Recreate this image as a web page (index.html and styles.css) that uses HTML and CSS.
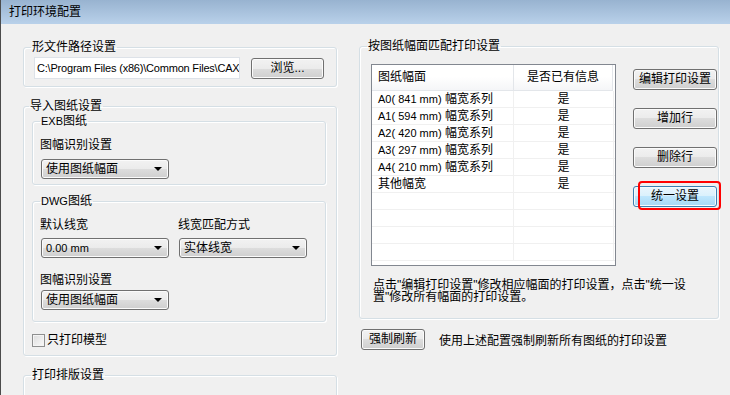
FILE: index.html
```html
<!DOCTYPE html>
<html lang="zh-CN">
<head>
<meta charset="utf-8">
<title>打印环境配置</title>
<link rel="stylesheet" href="styles.css">
</head>
<body>
<div class="window">
  <div class="titlebar">打印环境配置</div>
  <div class="content">
    <div class="col-left">
      <fieldset class="group g1">
        <legend class="shift3">形文件路径设置</legend>
        <div class="path-row">
          <div class="input lat">C:\Program Files (x86)\Common Files\CAX</div>
          <div class="btn btn-browse">浏览...</div>
        </div>
      </fieldset>

      <fieldset class="group g2">
        <legend class="shift3">导入图纸设置</legend>
        <fieldset class="group sub exb">
          <legend><span class="lat">EXB</span>图纸</legend>
          <div class="lbl">图幅识别设置</div>
          <div class="combo c-first"><span>使用图纸幅面</span><i class="arrow"></i></div>
        </fieldset>
        <fieldset class="group sub dwg">
          <legend><span class="lat">DWG</span>图纸</legend>
          <div class="dwg-grid">
            <div class="lbl">默认线宽</div>
            <div class="lbl">线宽匹配方式</div>
            <div class="combo c-row"><span class="lat">0.00 mm</span><i class="arrow"></i></div>
            <div class="combo c-row"><span>实体线宽</span><i class="arrow"></i></div>
          </div>
          <div class="lbl lbl-2">图幅识别设置</div>
          <div class="combo c-last"><span>使用图纸幅面</span><i class="arrow"></i></div>
        </fieldset>
        <div class="check-row"><span class="checkbox"></span><span>只打印模型</span></div>
      </fieldset>

      <fieldset class="group g3">
        <legend class="shift3">打印排版设置</legend>
      </fieldset>
    </div>

    <div class="col-right">
      <fieldset class="group g4">
        <legend class="shift4">按图纸幅面匹配打印设置</legend>
        <div class="match-row">
          <div class="list">
            <div class="lrow head">
              <div class="c1">图纸幅面</div><div class="c2">是否已有信息</div><div class="c3"></div>
            </div>
            <div class="lrow"><div class="c1"><span class="lat">A0( 841 mm)</span> 幅宽系列</div><div class="c2">是</div><div class="c3"></div></div>
            <div class="lrow"><div class="c1"><span class="lat">A1( 594 mm)</span> 幅宽系列</div><div class="c2">是</div><div class="c3"></div></div>
            <div class="lrow"><div class="c1"><span class="lat">A2( 420 mm)</span> 幅宽系列</div><div class="c2">是</div><div class="c3"></div></div>
            <div class="lrow"><div class="c1"><span class="lat">A3( 297 mm)</span> 幅宽系列</div><div class="c2">是</div><div class="c3"></div></div>
            <div class="lrow"><div class="c1"><span class="lat">A4( 210 mm)</span> 幅宽系列</div><div class="c2">是</div><div class="c3"></div></div>
            <div class="lrow"><div class="c1">其他幅宽</div><div class="c2">是</div><div class="c3"></div></div>
            <div class="lrow"><div class="c1"></div><div class="c2"></div><div class="c3"></div></div>
            <div class="lrow"><div class="c1"></div><div class="c2"></div><div class="c3"></div></div>
            <div class="lrow"><div class="c1"></div><div class="c2"></div><div class="c3"></div></div>
            <div class="lrow"><div class="c1"></div><div class="c2"></div><div class="c3"></div></div>
          </div>
          <div class="side-btns">
            <div class="btn">编辑打印设置</div>
            <div class="btn">增加行</div>
            <div class="btn">删除行</div>
            <div class="btn btn-focus">统一设置<span class="mark"></span></div>
          </div>
        </div>
        <p class="desc">点击"编辑打印设置"修改相应幅面的打印设置，点击"统一设置"修改所有幅面的打印设置。</p>
      </fieldset>
      <div class="refresh-row">
        <div class="btn btn-refresh">强制刷新</div>
        <span>使用上述配置强制刷新所有图纸的打印设置</span>
      </div>
    </div>
  </div>
</div>
</body>
</html>
```

FILE: styles.css
```css
* { box-sizing: border-box; }
html, body { margin: 0; padding: 0; }
body {
  background: #f0f0f0;
  font-family: "Liberation Sans", "Noto Sans CJK SC", sans-serif;
  font-size: 12px;
  color: #000;
}
.window {
  width: 730px;
  height: 395px;
  overflow: hidden;
  background: #f0f0f0;
  border-left: 1px solid #4b4b4b;
}
.titlebar {
  height: 24px;
  line-height: 24px;
  padding-left: 8px;
  background: linear-gradient(#98b3d0, #b9d1ea);
  font-size: 12px;
}
.content {
  display: flex;
  gap: 22px;
  padding-left: 22px;
}
.col-left { width: 314px; }
.col-right { width: 360px; }

.lat { font-family: "Liberation Sans", sans-serif; font-size: 11px; }

.group {
  margin: 0;
  border: 1px solid #d5dfe5;
  border-radius: 3px;
  box-shadow: inset 1px 1px 0 #fff, 1px 1px 0 #fff;
  min-width: 0;
}
.group legend {
  padding: 0 1px;
  line-height: 14px;
  font-size: 12px;
}
.group legend.shift3 { margin-left: -3px; }
.group legend.shift4 { margin-left: -4px; }

.g1 { margin-top: 16px; padding: 3px 10px 7px 10px; }
.path-row { display: flex; align-items: flex-start; gap: 11px; }
.input {
  width: 206px;
  height: 22px;
  line-height: 20px;
  background: #fff;
  border: 1px solid #dde2e8;
  padding-left: 2px;
  letter-spacing: -0.2px;
  white-space: nowrap;
  overflow: hidden;
}
.btn {
  height: 21px;
  line-height: 19px;
  text-align: center;
  border: 1px solid #707070;
  border-radius: 3px;
  background: linear-gradient(#f2f2f2 0%, #ebebeb 50%, #dddddd 50%, #cfcfcf 100%);
  box-shadow: inset 0 0 0 1px #fbfbfb;
  white-space: nowrap;
  font-size: 12px;
}
.btn-browse { width: 73px; margin-top: 1px; }

.g2 { margin-top: 12px; padding: 1px 10px 8px 8px; }
.sub { padding: 10px 7px 5px 7px; }
.lbl { line-height: 14px; }
.combo {
  width: 128px;
  height: 20px;
  margin-left: 1px;
  border: 1px solid #707070;
  border-radius: 3px;
  background: linear-gradient(#f2f2f2 0%, #ebebeb 50%, #dddddd 50%, #cfcfcf 100%);
  box-shadow: inset 0 0 0 1px #fbfbfb;
  display: flex;
  align-items: center;
  justify-content: space-between;
  padding: 0 5px 0 4px;
  line-height: 18px;
}
.arrow {
  width: 0; height: 0;
  border-left: 4px solid transparent;
  border-right: 4px solid transparent;
  border-top: 4px solid #000;
  margin-right: 1px;
}
.c-first { margin-top: 7px; }
.dwg { margin-top: 9px; padding: 10px 7px 11px 7px; }
.dwg-grid {
  display: grid;
  grid-template-columns: 138px 138px;
  row-gap: 6px;
}
.lbl-2 { margin-top: 15px; }
.c-last { margin-top: 3px; }
.check-row {
  margin-top: 11px;
  display: flex;
  align-items: center;
  line-height: 14px;
  gap: 2px;
  font-size: 12px;
}
.checkbox {
  width: 13px; height: 13px;
  border: 1px solid #8e8f8f;
  background: linear-gradient(135deg, #dcdcdc, #fafafa);
  box-shadow: inset 0 0 0 1px #f4f4f4;
}
.g3 { margin-top: 12px; padding: 0 10px; height: 40px; }

.g4 { margin-top: 15px; padding: 11px 1px 15px 11px; }
.match-row { display: flex; gap: 17px; align-items: flex-start; }
.list {
  width: 245px;
  height: 202px;
  border: 1px solid #828790;
  background: #fff;
  overflow: hidden;
}
.lrow { display: flex; height: 17px; line-height: 16px; }
.lrow > div { border-bottom: 1px solid #f0f0f0; white-space: nowrap; }
.lrow .c1 { width: 142px; padding-left: 6px; border-right: 1px solid #f0f0f0; }
.lrow .c2 { width: 100px; text-align: center; border-right: 1px solid #f0f0f0; }
.lrow .c3 { flex: 1; }
.lrow.head { height: 26px; line-height: 25px; background: linear-gradient(#ffffff 0%, #ffffff 45%, #f4f5f7 100%); font-size: 12px; }
.lrow.head > div { border-bottom: 1px solid #e3e6ea; }
.lrow.head .c1, .lrow.head .c2 { border-right: 1px solid #e3e6ea; }
.lrow.head .c2 { width: 99px; }
.lrow.head .c3 { background: #fff; border-bottom-color: #fff; }

.side-btns {
  width: 84px;
  margin-top: 5px;
  display: flex;
  flex-direction: column;
  gap: 18px;
}
.btn-focus {
  position: relative;
  border-color: #3c7fb1;
  background: linear-gradient(#eaf6fd 0%, #d9f0fc 50%, #bee6fd 50%, #a7d9f5 100%);
  box-shadow: inset 0 0 0 1px #f5fbfe;
}
.mark {
  position: absolute;
  left: 4px; top: -6px; right: -5px; bottom: -4px;
  border: 2px solid #ff0000;
  border-radius: 4px;
}
.desc {
  margin: 13px 0 0 2px;
  width: 318px;
  line-height: 12px;
  font-size: 12px;
}
.refresh-row {
  margin-top: 10px;
  margin-left: 2px;
  display: flex;
  align-items: center;
  gap: 14px;
  font-size: 12px;
}
.btn-refresh { width: 64px; }
```
